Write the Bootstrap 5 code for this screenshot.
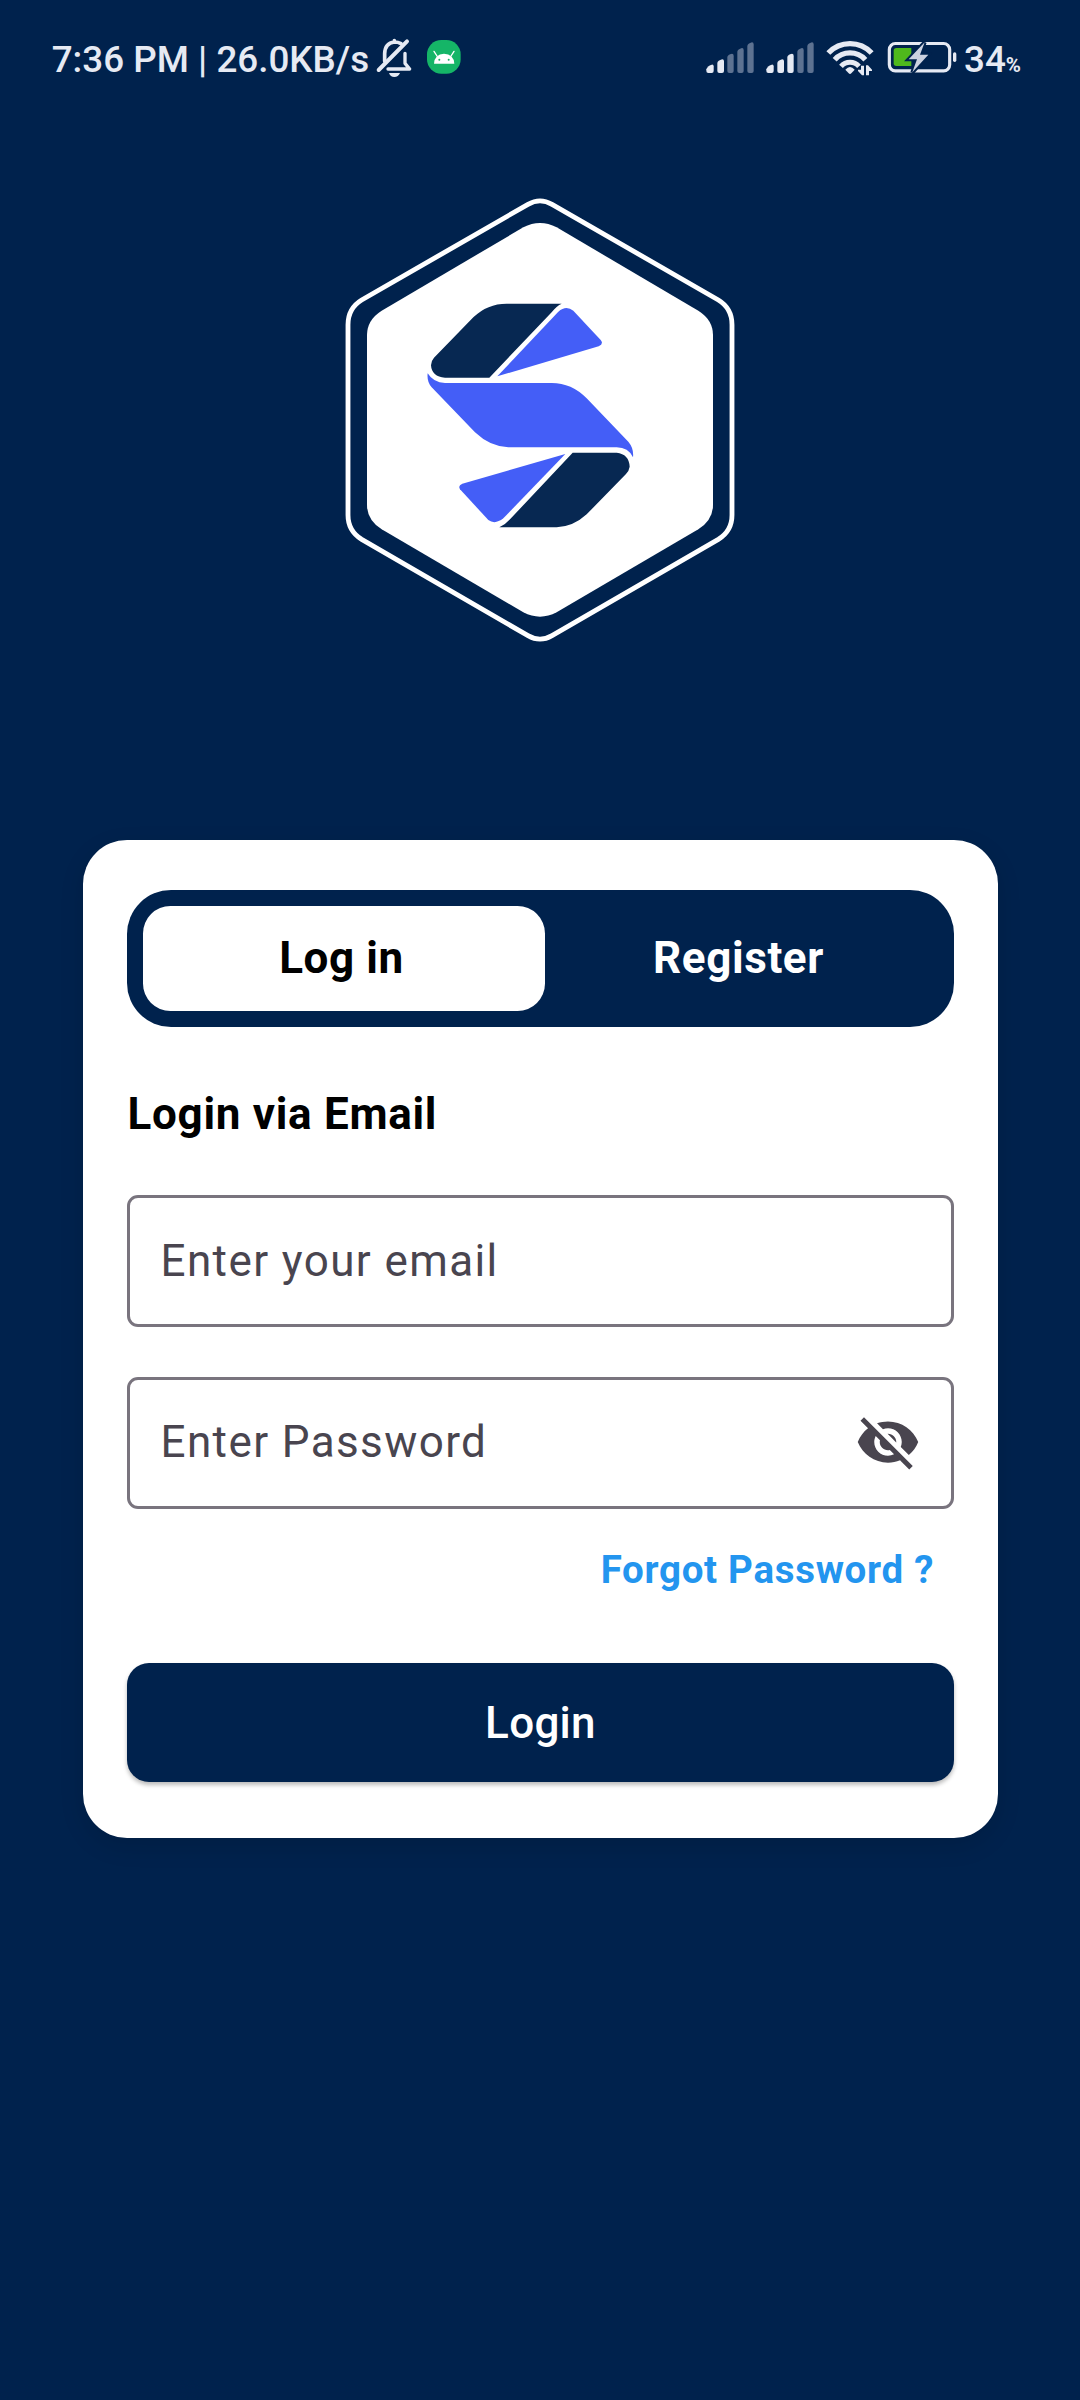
<!DOCTYPE html>
<html lang="en">
<head>
<meta charset="utf-8">
<meta name="viewport" content="width=device-width, initial-scale=1">
<title>Login</title>
<link href="https://cdn.jsdelivr.net/npm/bootstrap@5.3.0/dist/css/bootstrap.min.css" rel="stylesheet">
<style>
:root { --navy: #00224d; }
body { background: var(--navy); font-family: Roboto, "Liberation Sans", sans-serif; height: 2400px; }
svg { display: block; flex: none; }
.status-bar { height: 120px; padding: 0 59px 0 51.7px; color: #e6eaf3; font-size: 36.8px; font-weight: 500; line-height: 44px; }
.status-bar .clock { white-space: pre; margin-right: 2.8px; }
.pct { font-size: 20.5px; line-height: 24px; font-weight: 700; }
.brand { height: 720px; padding-top: 60px; }
.login-card { width: 915px; height: 998.3px; border: 0; border-radius: 44px; padding: 49.5px 44px 0; box-shadow: 0 8px 24px rgba(0,0,0,.12); }
.switcher { height: 137.3px; padding: 16.5px; border-radius: 44px; background: var(--navy); }
.switcher .nav-link { height: 104.5px; width: 392px; border-radius: 27.5px; color: #fff; font-size: 44px; font-weight: 700; letter-spacing: .6px; padding: 0 5px 0 0; }
.switcher .nav-link.active { background: #fff; color: #000; width: 402px; }
.via { font-size: 44px; line-height: 52px; font-weight: 700; letter-spacing: .7px; color: #000; margin: 60.8px 0 55.9px 1px; }
.field { height: 132px; border: 3px solid #79747e; border-radius: 11px; padding: 0 30px 1px 31px; background: #fff; }
.field + .field { margin-top: 49.3px; }
.field .form-control { border: 0; padding: 0; background: none; box-shadow: none; font-size: 44px; line-height: 52px; letter-spacing: 1.4px; color: #49454f; }
.field .form-control::placeholder { color: #49454f; opacity: 1; }
.forgot { margin: 37.9px 19.5px 70.6px; font-size: 38.5px; line-height: 46px; font-weight: 700; letter-spacing: .7px; color: #2395ef; }
.btn-login { height: 118.4px; border: 0; border-radius: 22px; background: var(--navy); color: #fff; font-size: 44px; font-weight: 500; letter-spacing: .28px; padding: 1.5px 0 0 1px; box-shadow: 0 3px 4px rgba(0,0,0,.27); }
</style>
</head>
<body>
<header class="status-bar d-flex align-items-center justify-content-between">
  <div class="d-flex align-items-center">
    <span class="clock">7:36 PM | 26.0KB/s</span>
    <!-- muted bell and android badge -->
    <svg width="92" height="60" viewBox="1026 30 276 180" fill="none" stroke-linecap="round" stroke-linejoin="round">
      <path d="M1064 124V101Q1065 69 1093 66Q1104 66 1113 71M1093 62V66" stroke="#e6eaf3" stroke-width="11"/>
      <path d="M1046 150L1131 64" stroke="#e6eaf3" stroke-width="12"/>
      <path d="M1074 147H1139L1125 130V100" stroke="#e6eaf3" stroke-width="10"/>
      <path d="M1077 159H1110Q1105 171 1093 171T1077 159Z" fill="#e6eaf3"/>
      <rect x="1191" y="60" width="101" height="101" rx="43" fill="#15b567"/>
      <path d="M1212 131Q1214 102 1242 101Q1271 102 1273 131Z" fill="#fff"/>
      <path d="M1221 108L1212 94M1263 108L1272 94" stroke="#fff" stroke-width="4"/>
      <circle cx="1228" cy="119" r="3" fill="#15b567"/><circle cx="1256" cy="119" r="3" fill="#15b567"/>
    </svg>
  </div>
  <div class="d-flex align-items-center">
    <!-- signal, wifi, charging battery -->
    <svg width="260" height="60" viewBox="42 30 780 180" fill="#e6eaf3">
      <defs>
        <g id="sig">
          <path d="M49 153V148Q52 138 65 134Q71 133 71 139V153Q71 159 65 159H55Q49 159 49 153Z"/>
          <path d="M82 153V129Q83 122 97 118Q102 118 102 124V153Q102 159 96 159H88Q82 159 82 153Z"/>
        </g>
        <path id="b3" d="M112 153V111Q113 104 126 101Q131 101 131 107V153Q131 159 125 159H118Q112 159 112 153Z"/>
        <g id="b45">
          <path d="M142 153V95Q143 88 156 84Q161 84 161 90V153Q161 159 155 159H148Q142 159 142 153Z"/>
          <path d="M172 153V78Q173 71 186 67Q191 67 191 73V153Q191 159 185 159H178Q172 159 172 153Z"/>
        </g>
      </defs>
      <use href="#sig"/><use href="#b3" fill="#5d7291"/><use href="#b45" fill="#5d7291"/>
      <use href="#sig" x="180"/><use href="#b3" x="180"/><use href="#b45" x="180" fill="#5d7291"/>
      <g fill="none" stroke="#e6eaf3" stroke-width="16">
        <path d="M415 99A89 89 0 0 1 545 99"/>
        <path d="M434 119A62 62 0 0 1 526 119"/>
        <path d="M453 139A36 36 0 0 1 507 139" stroke-width="15"/>
      </g>
      <path d="M466 149Q480 133 494 149L484 160Q480 164 476 160Z"/>
      <path d="M513 137H522V166H516L504 153V149H513ZM528 166H537V153H546V149L534 136H528Z"/>
      <rect x="598" y="70.500" width="181" height="82" rx="18" fill="none" stroke="#e6eaf3" stroke-width="9.500"/>
      <path d="M619 84H664V138H619Q611 138 611 130V92Q611 84 619 84Z" fill="#4fb81c"/>
      <path d="M704 67L656 118H681L667 157L715 104H690Z" fill="#ccd2e0" stroke="#00224d" stroke-width="12" paint-order="stroke"/>
      <rect x="789" y="97" width="10" height="29" rx="5"/>
    </svg>
    <div class="d-flex align-items-baseline"><span>34</span><span class="pct">%</span></div>
  </div>
</header>
<main class="d-flex flex-column align-items-center">
  <div class="brand">
    <svg width="420" height="480" viewBox="0 0 1260 1440">
      <path d="M594 73Q630 52 666 73L1165 360Q1206 385 1206 434V1005Q1206 1053 1165 1078L666 1367Q630 1388 594 1367L95 1078Q54 1053 54 1005V434Q54 385 95 360Z" fill="none" stroke="#fff" stroke-width="14.500"/>
      <path d="M580 142Q630 116 680 142L1105 392Q1149 420 1149 465V975Q1149 1020 1105 1048L680 1297Q630 1323 580 1297L155 1048Q111 1020 111 975V465Q111 420 155 392Z" fill="#fff"/>
      <g fill="#072852">
        <path d="M695 371H530Q472 371 430 412L312 533Q303 543 303 556Q305 590 345 593H478L665 397Q680 377 695 371Z"/>
        <path d="M728 818H860Q897 822 899 860Q897 873 888 882L770 1003Q730 1040 680 1042H508Q525 1035 540 1018Z"/>
      </g>
      <g fill="#445ef7">
        <path d="M502 589L685 395Q708 374 730 392L812 480Q822 492 806 499Z"/>
        <path d="M293 580Q310 608 345 609H665Q725 609 770 655L895 785Q912 805 909 832Q895 802 860 802H535Q480 800 435 757L305 622Q290 605 293 580Z"/>
        <path d="M706 822L520 1015Q495 1035 475 1020L390 928Q383 917 397 911Z"/>
      </g>
    </svg>
  </div>
  <section class="card login-card">
    <nav class="nav switcher flex-nowrap">
      <a class="nav-link active d-flex align-items-center justify-content-center">Log in</a>
      <a class="nav-link d-flex align-items-center justify-content-center">Register</a>
    </nav>
    <h1 class="via">Login via Email</h1>
    <div class="field d-flex align-items-center"><input type="email" class="form-control" placeholder="Enter your email"></div>
    <div class="field d-flex align-items-center">
      <input type="password" class="form-control" placeholder="Enter Password">
      <svg width="66" height="66" viewBox="0 0 24 24" fill="#49454f"><path d="M12 7c2.760 0 5 2.240 5 5 0 .65-.13 1.260-.36 1.830l2.920 2.920c1.510-1.260 2.700-2.890 3.430-4.750-1.730-4.390-6-7.500-11-7.500-1.400 0-2.740.25-3.980.7l2.160 2.160C10.740 7.130 11.350 7 12 7zM2 4.270l2.280 2.280.46.46C3.080 8.300 1.780 10.020 1 12c1.730 4.390 6 7.500 11 7.500 1.550 0 3.030-.3 4.380-.84l.42.42L19.730 22 21 20.730 3.270 3 2 4.270zM7.530 9.800l1.550 1.550c-.05.21-.08.43-.08.65 0 1.660 1.340 3 3 3 .22 0 .44-.03.65-.08l1.550 1.550c-.67.33-1.410.53-2.200.53-2.760 0-5-2.240-5-5 0-.79.2-1.530.53-2.200zm4.310-.78l3.150 3.150.02-.16c0-1.660-1.340-3-3-3l-.17.01z"/></svg>
    </div>
    <div class="forgot text-end">Forgot Password ?</div>
    <button class="btn btn-login">Login</button>
  </section>
</main>
<script src="https://cdn.jsdelivr.net/npm/bootstrap@5.3.0/dist/js/bootstrap.bundle.min.js"></script>
</body>
</html>
